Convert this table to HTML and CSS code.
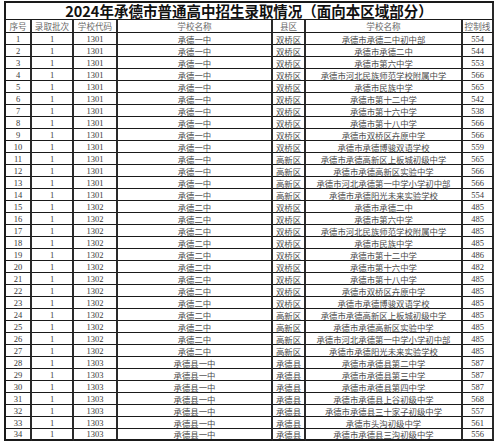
FILE: index.html
```html
<!DOCTYPE html>
<html lang="zh-CN">
<head>
<meta charset="utf-8">
<title>2024年承德市普通高中招生录取情况</title>
<link rel="stylesheet" href="styles.css">
</head>
<body>
<table class="sheet">
<colgroup>
<col class="c-no"><col class="c-batch"><col class="c-code"><col class="c-school"><col class="c-area"><col class="c-src"><col class="c-line">
</colgroup>
<thead>
<tr class="title-row"><th colspan="7" class="title">2024年承德市普通高中招生录取情况（面向本区域部分）</th></tr>
<tr class="head-row"><th>序号</th><th>录取批次</th><th>学校代码</th><th>学校名称</th><th>县区</th><th>学校名称</th><th>控制线</th></tr>
</thead>
<tbody>
<tr><td class="num">1</td><td class="num">1</td><td class="num">1301</td><td>承德一中</td><td>双桥区</td><td>承德市承德二中初中部</td><td class="num">554</td></tr>
<tr><td class="num">2</td><td class="num">1</td><td class="num">1301</td><td>承德一中</td><td>双桥区</td><td>承德市承德二中</td><td class="num">544</td></tr>
<tr><td class="num">3</td><td class="num">1</td><td class="num">1301</td><td>承德一中</td><td>双桥区</td><td>承德市第六中学</td><td class="num">553</td></tr>
<tr><td class="num">4</td><td class="num">1</td><td class="num">1301</td><td>承德一中</td><td>双桥区</td><td>承德市河北民族师范学校附属中学</td><td class="num">566</td></tr>
<tr><td class="num">5</td><td class="num">1</td><td class="num">1301</td><td>承德一中</td><td>双桥区</td><td>承德市民族中学</td><td class="num">565</td></tr>
<tr><td class="num">6</td><td class="num">1</td><td class="num">1301</td><td>承德一中</td><td>双桥区</td><td>承德市第十二中学</td><td class="num">542</td></tr>
<tr><td class="num">7</td><td class="num">1</td><td class="num">1301</td><td>承德一中</td><td>双桥区</td><td>承德市第十六中学</td><td class="num">538</td></tr>
<tr><td class="num">8</td><td class="num">1</td><td class="num">1301</td><td>承德一中</td><td>双桥区</td><td>承德市第十八中学</td><td class="num">566</td></tr>
<tr><td class="num">9</td><td class="num">1</td><td class="num">1301</td><td>承德一中</td><td>双桥区</td><td>承德市双桥区卉原中学</td><td class="num">566</td></tr>
<tr><td class="num">10</td><td class="num">1</td><td class="num">1301</td><td>承德一中</td><td>双桥区</td><td>承德市承德博骏双语学校</td><td class="num">559</td></tr>
<tr><td class="num">11</td><td class="num">1</td><td class="num">1301</td><td>承德一中</td><td>高新区</td><td>承德市承德高新区上板城初级中学</td><td class="num">565</td></tr>
<tr><td class="num">12</td><td class="num">1</td><td class="num">1301</td><td>承德一中</td><td>高新区</td><td>承德市承德高新区实验中学</td><td class="num">566</td></tr>
<tr><td class="num">13</td><td class="num">1</td><td class="num">1301</td><td>承德一中</td><td>高新区</td><td>承德市河北承德第一中学小学初中部</td><td class="num">566</td></tr>
<tr><td class="num">14</td><td class="num">1</td><td class="num">1301</td><td>承德一中</td><td>高新区</td><td>承德市承德阳光未来实验学校</td><td class="num">554</td></tr>
<tr><td class="num">15</td><td class="num">1</td><td class="num">1302</td><td>承德二中</td><td>双桥区</td><td>承德市承德二中</td><td class="num">485</td></tr>
<tr><td class="num">16</td><td class="num">1</td><td class="num">1302</td><td>承德二中</td><td>双桥区</td><td>承德市第六中学</td><td class="num">485</td></tr>
<tr><td class="num">17</td><td class="num">1</td><td class="num">1302</td><td>承德二中</td><td>双桥区</td><td>承德市河北民族师范学校附属中学</td><td class="num">485</td></tr>
<tr><td class="num">18</td><td class="num">1</td><td class="num">1302</td><td>承德二中</td><td>双桥区</td><td>承德市民族中学</td><td class="num">485</td></tr>
<tr><td class="num">19</td><td class="num">1</td><td class="num">1302</td><td>承德二中</td><td>双桥区</td><td>承德市第十二中学</td><td class="num">486</td></tr>
<tr><td class="num">20</td><td class="num">1</td><td class="num">1302</td><td>承德二中</td><td>双桥区</td><td>承德市第十六中学</td><td class="num">482</td></tr>
<tr><td class="num">21</td><td class="num">1</td><td class="num">1302</td><td>承德二中</td><td>双桥区</td><td>承德市第十八中学</td><td class="num">485</td></tr>
<tr><td class="num">22</td><td class="num">1</td><td class="num">1302</td><td>承德二中</td><td>双桥区</td><td>承德市双桥区卉原中学</td><td class="num">485</td></tr>
<tr><td class="num">23</td><td class="num">1</td><td class="num">1302</td><td>承德二中</td><td>双桥区</td><td>承德市承德博骏双语学校</td><td class="num">485</td></tr>
<tr><td class="num">24</td><td class="num">1</td><td class="num">1302</td><td>承德二中</td><td>高新区</td><td>承德市承德高新区上板城初级中学</td><td class="num">485</td></tr>
<tr><td class="num">25</td><td class="num">1</td><td class="num">1302</td><td>承德二中</td><td>高新区</td><td>承德市承德高新区实验中学</td><td class="num">485</td></tr>
<tr><td class="num">26</td><td class="num">1</td><td class="num">1302</td><td>承德二中</td><td>高新区</td><td>承德市河北承德第一中学小学初中部</td><td class="num">485</td></tr>
<tr><td class="num">27</td><td class="num">1</td><td class="num">1302</td><td>承德二中</td><td>高新区</td><td>承德市承德阳光未来实验学校</td><td class="num">485</td></tr>
<tr><td class="num">28</td><td class="num">1</td><td class="num">1303</td><td>承德县一中</td><td>承德县</td><td>承德市承德县第二中学</td><td class="num">587</td></tr>
<tr><td class="num">29</td><td class="num">1</td><td class="num">1303</td><td>承德县一中</td><td>承德县</td><td>承德市承德县第三中学</td><td class="num">587</td></tr>
<tr><td class="num">30</td><td class="num">1</td><td class="num">1303</td><td>承德县一中</td><td>承德县</td><td>承德市承德县第四中学</td><td class="num">587</td></tr>
<tr><td class="num">31</td><td class="num">1</td><td class="num">1303</td><td>承德县一中</td><td>承德县</td><td>承德市承德县上谷初级中学</td><td class="num">568</td></tr>
<tr><td class="num">32</td><td class="num">1</td><td class="num">1303</td><td>承德县一中</td><td>承德县</td><td>承德市承德县三十家子初级中学</td><td class="num">557</td></tr>
<tr><td class="num">33</td><td class="num">1</td><td class="num">1303</td><td>承德县一中</td><td>承德县</td><td>承德市头沟初级中学</td><td class="num">561</td></tr>
<tr><td class="num">34</td><td class="num">1</td><td class="num">1303</td><td>承德县一中</td><td>承德县</td><td>承德市承德县三沟初级中学</td><td class="num">556</td></tr>
</tbody>
</table>
</body>
</html>
```

FILE: styles.css
```css
html, body {
  margin: 0;
  padding: 0;
  background: #ffffff;
}

body {
  padding: 1px 0 0 4px;
  font-family: "Liberation Serif", "Noto Sans CJK SC", serif;
  color: #3a3a3a;
}

.sheet {
  width: 490px;
  table-layout: fixed;
  border-collapse: separate;
  border-spacing: 0;
  border-top: 2px solid #1a1a1a;
  border-left: 2px solid #1a1a1a;
}

.c-no { width: 26px; }
.c-batch { width: 42px; }
.c-code { width: 44px; }
.c-school { width: 155px; }
.c-area { width: 33px; }
.c-src { width: 157px; }
.c-line { width: 31px; }

.sheet th,
.sheet td {
  box-sizing: border-box;
  padding: 0;
  text-align: center;
  vertical-align: middle;
  white-space: nowrap;
  overflow: hidden;
  border-right: 2px solid #2a2a2a;
  border-bottom: 1px solid #1a1a1a;
}

.sheet .title {
  height: 17px;
  overflow: visible;
  font-family: "Noto Sans CJK SC", sans-serif;
  font-size: 14.5px;
  font-weight: 700;
  line-height: 16px;
  color: #111111;
}

.head-row th {
  height: 13px;
  font-family: "Noto Sans CJK SC", sans-serif;
  font-size: 8.6px;
  font-weight: 400;
  line-height: 10px;
  color: #6a6a6a;
}

.sheet td {
  height: 12px;
  font-family: "Noto Sans CJK SC", sans-serif;
  font-size: 8.4px;
  line-height: 10px;
  color: #4a4a4a;
}

.sheet tbody tr:last-child td {
  border-bottom-width: 2px;
}

.sheet td.num {
  font-family: "Liberation Serif", serif;
  font-size: 8.5px;
  color: #3a3a3a;
}
```
